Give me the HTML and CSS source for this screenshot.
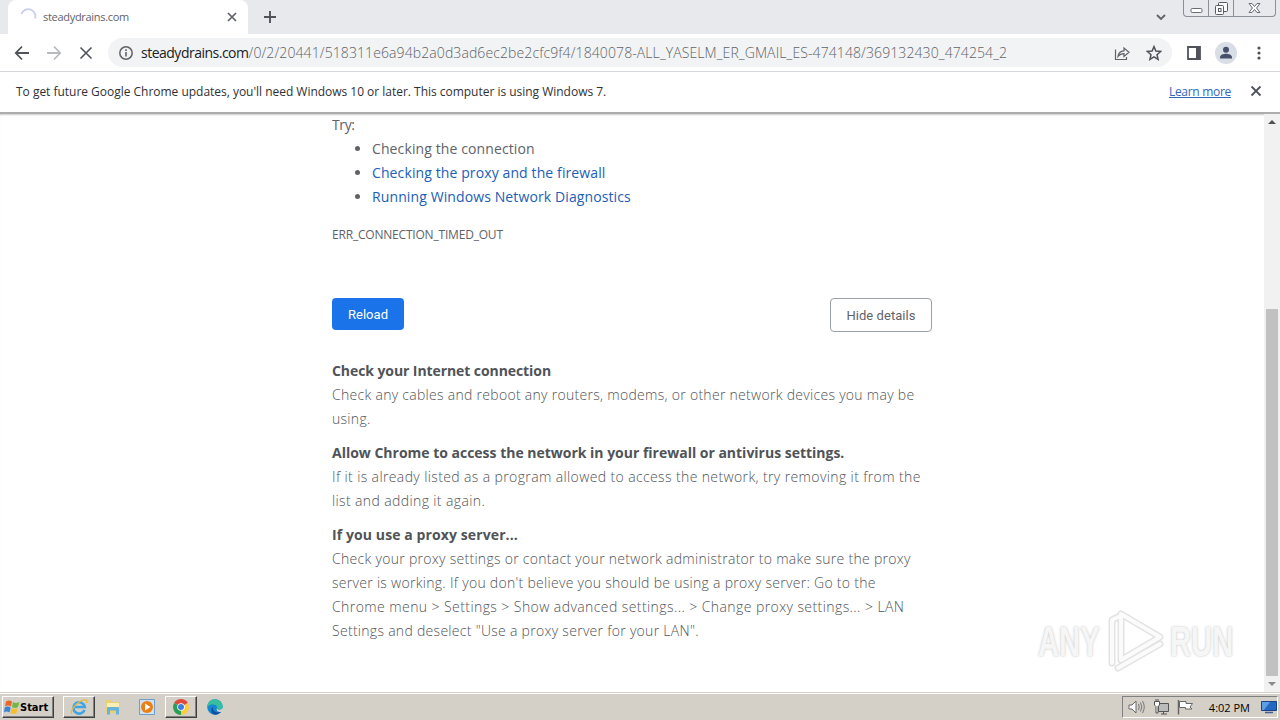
FILE: index.html
```html
<!DOCTYPE html>
<html lang="en">
<head>
    <meta charset="UTF-8">
    <meta name="viewport" content="width=device-width, initial-scale=1.0">
    <title>steadydrains.com</title>
    <link rel="stylesheet" href="styles.css">
</head>
<body>
    <div class="tab-strip">
        <div class="tab">
            <svg class="spinner" width="18" height="18" viewBox="0 0 18 18"><path d="M2.500 6A7 7 0 0 1 16 10.500" fill="none" stroke="#c9cdee" stroke-width="1.8"/></svg>
            <span class="tab-title">steadydrains.com</span>
            <svg class="tab-close" width="10" height="10" viewBox="0 0 10 10"><path d="M1 1l8 8M9 1L1 9" stroke="#5f6368" stroke-width="1.7"/></svg>
        </div>
        <svg class="new-tab" width="12" height="12" viewBox="0 0 12 12"><path d="M6 0v12M0 6h12" stroke="#50545a" stroke-width="1.9"/></svg>
        <svg class="tab-search" width="10" height="7" viewBox="0 0 10 7"><path d="M1 1l4 4 4-4" fill="none" stroke="#5f6368" stroke-width="1.8"/></svg>
        <div class="window-buttons">
            <span class="win-btn"><svg width="13" height="16" viewBox="0 0 13 16"><rect x="1" y="8.5" width="11" height="4" rx="1.2" fill="#fff" stroke="#666b75"/></svg></span>
            <span class="win-btn"><svg width="14" height="16" viewBox="0 0 14 16"><g fill="#fafafa" stroke="#555a64"><rect x="4.5" y="2.5" width="9" height="9" rx="1"/><rect x="1.5" y="5.5" width="8" height="9" rx="1"/><rect x="4.5" y="8.5" width="2.500" height="3"/></g></svg></span>
            <span class="win-btn wide"><svg width="13" height="16" viewBox="0 0 13 16"><path d="M1 3.500h3l2.500 3 2.500-3h3L8.500 8l3.500 4.500H9l-2.500-3-2.500 3H1L4.500 8z" fill="#fff" stroke="#666b75"/></svg></span>
        </div>
    </div>

    <div class="toolbar">
        <svg class="nav-icon" width="16" height="16" viewBox="0 0 16 16"><path d="M15 8H2M8 1.500L1.800 8 8 14.500" fill="none" stroke="#50545a" stroke-width="1.800"/></svg>
        <svg class="nav-icon" width="16" height="16" viewBox="0 0 16 16"><path d="M1 8h13M8 1.500L14.200 8 8 14.500" fill="none" stroke="#b9bbbe" stroke-width="1.800"/></svg>
        <svg class="nav-icon" width="16" height="16" viewBox="0 0 16 16"><path d="M2.500 2.500l11 11M13.500 2.500l-11 11" stroke="#50545a" stroke-width="1.600"/></svg>
        <div class="address-bar">
            <svg class="info-icon" width="14" height="14" viewBox="0 0 14 14"><circle cx="7" cy="7" r="6.200" fill="none" stroke="#5f6368" stroke-width="1.500"/><path d="M7 6v4.500M7 3.300v1.600" stroke="#5f6368" stroke-width="1.600"/></svg>
            <div class="url"><span class="host">steadydrains.com</span>/0/2/20441/518311e6a94b2a0d3ad6ec2be2cfc9f4/1840078-ALL_YASELM_ER_GMAIL_ES-474148/369132430_474254_2</div>
            <svg class="share" width="16" height="16" viewBox="0 0 16 16"><path d="M1.500 4.500v10h11V12M4 11.500c.3-3.500 2.500-5.500 6-5.700V3l5 4.300-5 4.200V8.700c-2.700 0-4.500.8-6 2.800z" fill="none" stroke="#5f6368" stroke-width="1.200"/></svg>
            <svg class="star" width="16" height="16" viewBox="0 0 16 16"><path d="M8 1.600l1.900 4.500 4.800.4-3.700 3.200 1.100 4.700L8 11.900l-4.100 2.500L5 9.700 1.300 6.500l4.800-.4z" fill="none" stroke="#50545a" stroke-width="1.500"/></svg>
        </div>
        <svg class="side-panel" width="14" height="14" viewBox="0 0 14 14"><path d="M1 1h12v12H1z" fill="none" stroke="#50545a" stroke-width="1.800"/><path d="M9 1h4v12H9z" fill="#50545a"/></svg>
        <svg class="avatar" width="22" height="22" viewBox="0 0 22 22"><circle cx="11" cy="11" r="11" fill="#d9dde5"/><circle cx="11" cy="7.800" r="3" fill="#47506b"/><path d="M5 16.500v-1.200c0-2.400 3.500-3.500 6-3.500s6 1.100 6 3.500v1.200z" fill="#47506b"/></svg>
        <svg class="menu-dots" width="4" height="14" viewBox="0 0 4 14"><g fill="#50545a"><circle cx="2" cy="2" r="1.600"/><circle cx="2" cy="7" r="1.600"/><circle cx="2" cy="12" r="1.600"/></g></svg>
    </div>

    <div class="infobar">
        <span class="infobar-text">To get future Google Chrome updates, you'll need Windows 10 or later. This computer is using Windows 7.</span>
        <a class="learn-more">Learn more</a>
        <svg width="12" height="12" viewBox="0 0 12 12"><path d="M1.500 1.500l9 9M10.500 1.500l-9 9" stroke="#50545a" stroke-width="1.800"/></svg>
    </div>

    <div class="page">
        <div class="content">
            <p class="try">Try:</p>
            <ul class="suggestions">
                <li>Checking the connection</li>
                <li><a>Checking the proxy and the firewall</a></li>
                <li><a>Running Windows Network Diagnostics</a></li>
            </ul>
            <div class="error-code">ERR_CONNECTION_TIMED_OUT</div>
            <div class="buttons">
                <button class="reload">Reload</button>
                <button class="details">Hide details</button>
            </div>
            <div class="help">
                <h2>Check your Internet connection</h2>
                <p>Check any cables and reboot any routers, modems, or other network devices you may be<br>using.</p>
                <h2 class="tight">Allow Chrome to access the network in your firewall or antivirus settings.</h2>
                <p class="loose">If it is already listed as a program allowed to access the network, try removing it from the<br>list and adding it again.</p>
                <h2 class="loose">If you use a proxy server...</h2>
                <p>Check your proxy settings or contact your network administrator to make sure the proxy<br>server is working. If you don't believe you should be using a proxy server: Go to the<br><span class="path">Chrome menu &gt; Settings &gt; Show advanced settings... &gt; Change proxy settings... &gt; LAN</span><br>Settings and deselect "Use a proxy server for your LAN".</p>
            </div>
        </div>
        <div class="scrollbar">
            <svg width="16" height="16" viewBox="0 0 16 16"><path d="M4 10l4-4 4 4z" fill="#505050"/></svg>
            <div class="thumb"></div>
            <svg width="16" height="16" viewBox="0 0 16 16"><path d="M4 6l4 4 4-4z" fill="#8a8a8a"/></svg>
        </div>
        <div class="watermark">
            <span class="mark-any">ANY</span>
            <svg width="58" height="66" viewBox="0 0 58 66"><g fill="none" stroke-linejoin="round" stroke-linecap="round"><path d="M5 55V12l6-3M11 60l42-24M14 6v46L53 29z" stroke="#e3e3e3" stroke-width="7"/><path d="M5 55V12l6-3M11 60l42-24M14 6v46L53 29z" stroke="#fbfbfb" stroke-width="4"/></g></svg>
            <span class="mark-run">RUN</span>
        </div>
    </div>

    <div class="taskbar">
        <div class="start">
            <svg width="17" height="16" viewBox="0 1 17 14"><path d="M3 2.500q3-2 6 0L8 7.500q-3-2-6 0z" fill="#e8672c"/><path d="M10 3q3 2 6.500 0L15 8q-3 2-6 0z" fill="#72b743"/><path d="M1.700 8.500q3-2 6 0l-1.200 5q-3-2-5.500 0z" fill="#3c83d0"/><path d="M8.700 9q3 2 6 0l-1.200 5q-3 2-6 0z" fill="#f5be2e"/></svg>
            <span>Start</span>
        </div>
        <div class="task raised">
            <svg width="18" height="18" viewBox="0 0 18 18"><path d="M14.500 12A5.700 5.700 0 1 1 14.800 9H5" fill="none" stroke="#3fa4e4" stroke-width="2.600"/><path d="M2 16C-1 12 10 1 16 2c1.500.5 1 2 .5 3" fill="none" stroke="#e9b93e" stroke-width="1.400"/></svg>
        </div>
        <div class="task">
            <svg width="18" height="18" viewBox="0 0 18 18"><path d="M2 2h5l1 2h8v11H2z" fill="#e9cf75"/><path d="M3 5h12v5H3z" fill="#f9eeb5"/><path d="M3 16.500V10q0-1 1-1h10q1 0 1 1v6.500h-3v-4H6v4z" fill="#69b2d8"/></svg>
        </div>
        <div class="task">
            <svg width="18" height="18" viewBox="0 0 18 18"><path d="M1.500 1.500h15v15h-15z" fill="#cfe2f1" stroke="#6f9fc8"/><circle cx="9" cy="9" r="6" fill="#ee7d12"/><path d="M7 5.500v7L12.500 9z" fill="#fff"/></svg>
        </div>
        <div class="task raised">
            <svg width="16" height="16" viewBox="0 0 16 16"><path d="M8 8L1.100 4A8 8 0 0 1 14.900 4z" fill="#dd4b3e"/><path d="M8 8l6.900-4A8 8 0 0 1 8 16z" fill="#fccc3d"/><path d="M8 8v8A8 8 0 0 1 1.100 4z" fill="#2c9d56"/><circle cx="8" cy="8" r="3.800" fill="#fff"/><circle cx="8" cy="8" r="3" fill="#3b7de3"/></svg>
        </div>
        <div class="task">
            <svg width="16" height="16" viewBox="0 0 16 16"><circle cx="8" cy="8" r="7.800" fill="#1586cf"/><path d="M.5 6A7.800 7.800 0 0 1 15.800 8c0 3-4.800 3.500-6 1.500 1-2-1-4-3.500-4S2 6 .5 8z" fill="#35bf9e"/><path d="M6 8c-1 4 3 6.500 8.200 4.600A8 8 0 0 1 8 15.800C4 15 3 10 6 8z" fill="#124f9d"/><path d="M9.800 9.500c1.200 2 6 1.500 6-1.500l.2 4.500c-3 1-7 .5-6.200-3z" fill="#d4d0c8"/></svg>
        </div>
        <div class="tray">
            <svg width="18" height="16" viewBox="0 0 18 16"><path d="M1 6h3l4-4v12l-4-4H1z" fill="#fff" stroke="#666"/><path d="M10.500 5q1.500 3 0 6M12.500 3.500q2.500 4.500 0 9M14.500 2q3.500 6 0 12" fill="none" stroke="#777"/></svg>
            <svg width="17" height="16" viewBox="0 0 17 16"><path d="M5.500 4.500h10v8h-10zM8 15h6M10.500 12.500V15" fill="#bbb" stroke="#555"/><path d="M1.500 2.500h5V6L5 7.500V14H3V7.500L1.500 6zM3 0v2.500M5 0v2.500" fill="#fff" stroke="#555"/></svg>
            <svg width="17" height="16" viewBox="0 0 17 16"><path d="M1.500 1v14.500" stroke="#666" stroke-width="1.500"/><path d="M2.500 2.500H9v2h6.500L13 8l2 2H8.500V8.500h-6z" fill="#fff" stroke="#666"/></svg>
            <span class="clock">4:02 PM</span>
            <svg width="16" height="14" viewBox="0 0 16 14"><path d="M.5 1.500h15v9H.5z" fill="#2468c4" stroke="#17418a"/><path d="M1 2h8L3 10H1z" fill="#5f9de4"/><path d="M4 12.500h8" stroke="#44608c" stroke-width="1.500"/></svg>
        </div>
    </div>
</body>
</html>
```
FILE: styles.css
```css
* {
    box-sizing: border-box;
}

body {
    margin: 0;
    width: 1280px;
    height: 720px;
    display: flex;
    flex-direction: column;
    overflow: hidden;
    background-color: white;
    font-family: "Open Sans", "Noto Sans", sans-serif;
    color: #5f6368;
}

svg {
    display: block;
    flex-shrink: 0;
}

p, h2, ul {
    margin: 0;
    padding: 0;
}

/* Browser window */
.tab-strip {
    height: 34px;
    display: flex;
    align-items: center;
    padding-left: 8px;
    background-color: #e7e9ec;
}

.tab {
    width: 240px;
    height: 34px;
    display: flex;
    align-items: center;
    padding: 0 11px 0 11px;
    border-radius: 8px 8px 0 0;
    background-color: white;
}

.tab-title {
    flex: 1;
    margin-left: 6px;
    padding-bottom: 1px;
    font-size: 11px;
    letter-spacing: -0.3px;
    white-space: nowrap;
}

.new-tab {
    margin-left: 16px;
}

.tab-search {
    margin-left: auto;
}

.window-buttons {
    display: flex;
    align-self: flex-start;
    width: 93px;
    height: 17px;
    margin: 0 4px 0 17px;
    border: 1px solid #8b8f96;
    border-top: none;
    border-radius: 0 0 4px 4px;
}

.win-btn {
    width: 25px;
    display: flex;
    justify-content: center;
    border-right: 1px solid #8b8f96;
}

.win-btn.wide {
    flex: 1;
    border-right: none;
}

.toolbar {
    height: 38px;
    display: flex;
    align-items: center;
    padding-left: 14px;
    border-bottom: 1px solid #d5d7da;
}

.nav-icon {
    margin-right: 16px;
}

.address-bar {
    width: 1064px;
    height: 29px;
    display: flex;
    align-items: center;
    margin: 0 15px 0 -2px;
    padding: 0 10px 0 11px;
    border-radius: 15px;
    background-color: #f1f3f4;
}

.url {
    flex: 1;
    margin-left: 8px;
    font-size: 14px;
    font-weight: 300;
    letter-spacing: 0.1px;
    white-space: nowrap;
    color: #5f6368;
}

.host {
    font-weight: 400;
    letter-spacing: -0.5px;
    color: #202124;
}

.star {
    margin-left: 16px;
}

.avatar {
    margin: 0 20px 0 14px;
}

.infobar {
    height: 42px;
    display: flex;
    align-items: center;
    padding: 0 18px 2px 16px;
    border-bottom: 2px solid #adadad;
    font-size: 12px;
    color: #303134;
}

.infobar-text {
    flex: 1;
    letter-spacing: -0.02px;
}

.learn-more {
    margin-right: 19px;
    letter-spacing: -0.3px;
    color: #3367b8;
    text-decoration: underline;
}

/* Error page */
.page {
    position: relative;
    height: 578px;
    display: flex;
    justify-content: space-between;
    padding-left: 332px;
    box-shadow: inset 0 2px 2px -1px #cccccc;
}

.content {
    width: 600px;
    font-size: 14px;
    line-height: 24px;
    white-space: nowrap;
}

.try {
    margin-top: -1px;
    letter-spacing: -0.4px;
}

.suggestions {
    padding-left: 40px;
    letter-spacing: 0.11px;
}

.suggestions a {
    color: #2060b8;
}

.error-code {
    margin-top: 14px;
    font-size: 12px;
    letter-spacing: -0.2px;
}

.buttons {
    display: flex;
    justify-content: space-between;
    align-items: flex-start;
    margin-top: 51px;
}

.buttons button {
    padding: 0;
    border-radius: 4px;
    font-family: Roboto, sans-serif;
    font-size: 13px;
    letter-spacing: 0.05px;
}

.reload {
    width: 72px;
    height: 32px;
    border: none;
    background-color: #1a73e8;
    color: white;
}

.details {
    width: 102px;
    height: 34px;
    border: 1px solid #9aa0a6;
    background-color: white;
    color: #5f6368;
}

.help {
    margin-top: 27px;
}

.help h2 {
    font-size: 14px;
    font-weight: 700;
    line-height: 24px;
    letter-spacing: -0.08px;
    color: #505357;
}

.help h2.tight {
    letter-spacing: -0.01px;
}

.help h2.loose {
    letter-spacing: 0.1px;
}

.help p {
    margin-bottom: 10px;
    font-weight: 300;
    letter-spacing: 0.29px;
    color: #505357;
}

.help p.loose {
    letter-spacing: 0.38px;
}

.path {
    letter-spacing: 0.42px;
}

.scrollbar {
    width: 16px;
    display: flex;
    flex-direction: column;
    background-color: #f1f1f1;
}

.thumb {
    width: 12px;
    height: 367px;
    margin: auto 2px 0;
    background-color: #c1c1c1;
}

.watermark {
    position: absolute;
    left: 1038px;
    top: 494px;
    display: flex;
    align-items: center;
    gap: 5px;
    font-family: "Liberation Sans", sans-serif;
    font-size: 43px;
    font-weight: 700;
    color: #f6f6f6;
    text-shadow: 0 0 3px #bdbdbd;
}

.mark-any, .mark-run {
    width: 64px;
    transform: scaleX(0.68);
    transform-origin: 0 50%;
}

/* Windows taskbar */
.taskbar {
    height: 28px;
    display: flex;
    align-items: center;
    padding: 1px 2px 0 2px;
    border-top: 1px solid #d4d0c8;
    background-color: #d4d0c8;
    box-shadow: inset 0 1px 0 white;
}

.start, .raised {
    border: 1px solid;
    border-color: white #404040 #404040 white;
    box-shadow: inset -1px -1px 0 #808080;
}

.start {
    width: 52px;
    height: 22px;
    display: flex;
    align-items: center;
    margin-right: 9px;
    font-family: "DejaVu Sans Condensed", "DejaVu Sans", sans-serif;
    font-size: 11px;
    font-weight: 700;
    color: black;
}

.task {
    width: 32px;
    height: 22px;
    display: flex;
    align-items: center;
    justify-content: center;
    margin-right: 2px;
}

.tray {
    width: 156px;
    height: 22px;
    display: flex;
    align-items: center;
    gap: 7px;
    margin-left: auto;
    padding-left: 5px;
    border: 1px solid;
    border-color: #808080 white white #808080;
}

.clock {
    flex: 1;
    text-align: right;
    margin-right: 4px;
    font-size: 11px;
    white-space: nowrap;
    color: black;
}
```
